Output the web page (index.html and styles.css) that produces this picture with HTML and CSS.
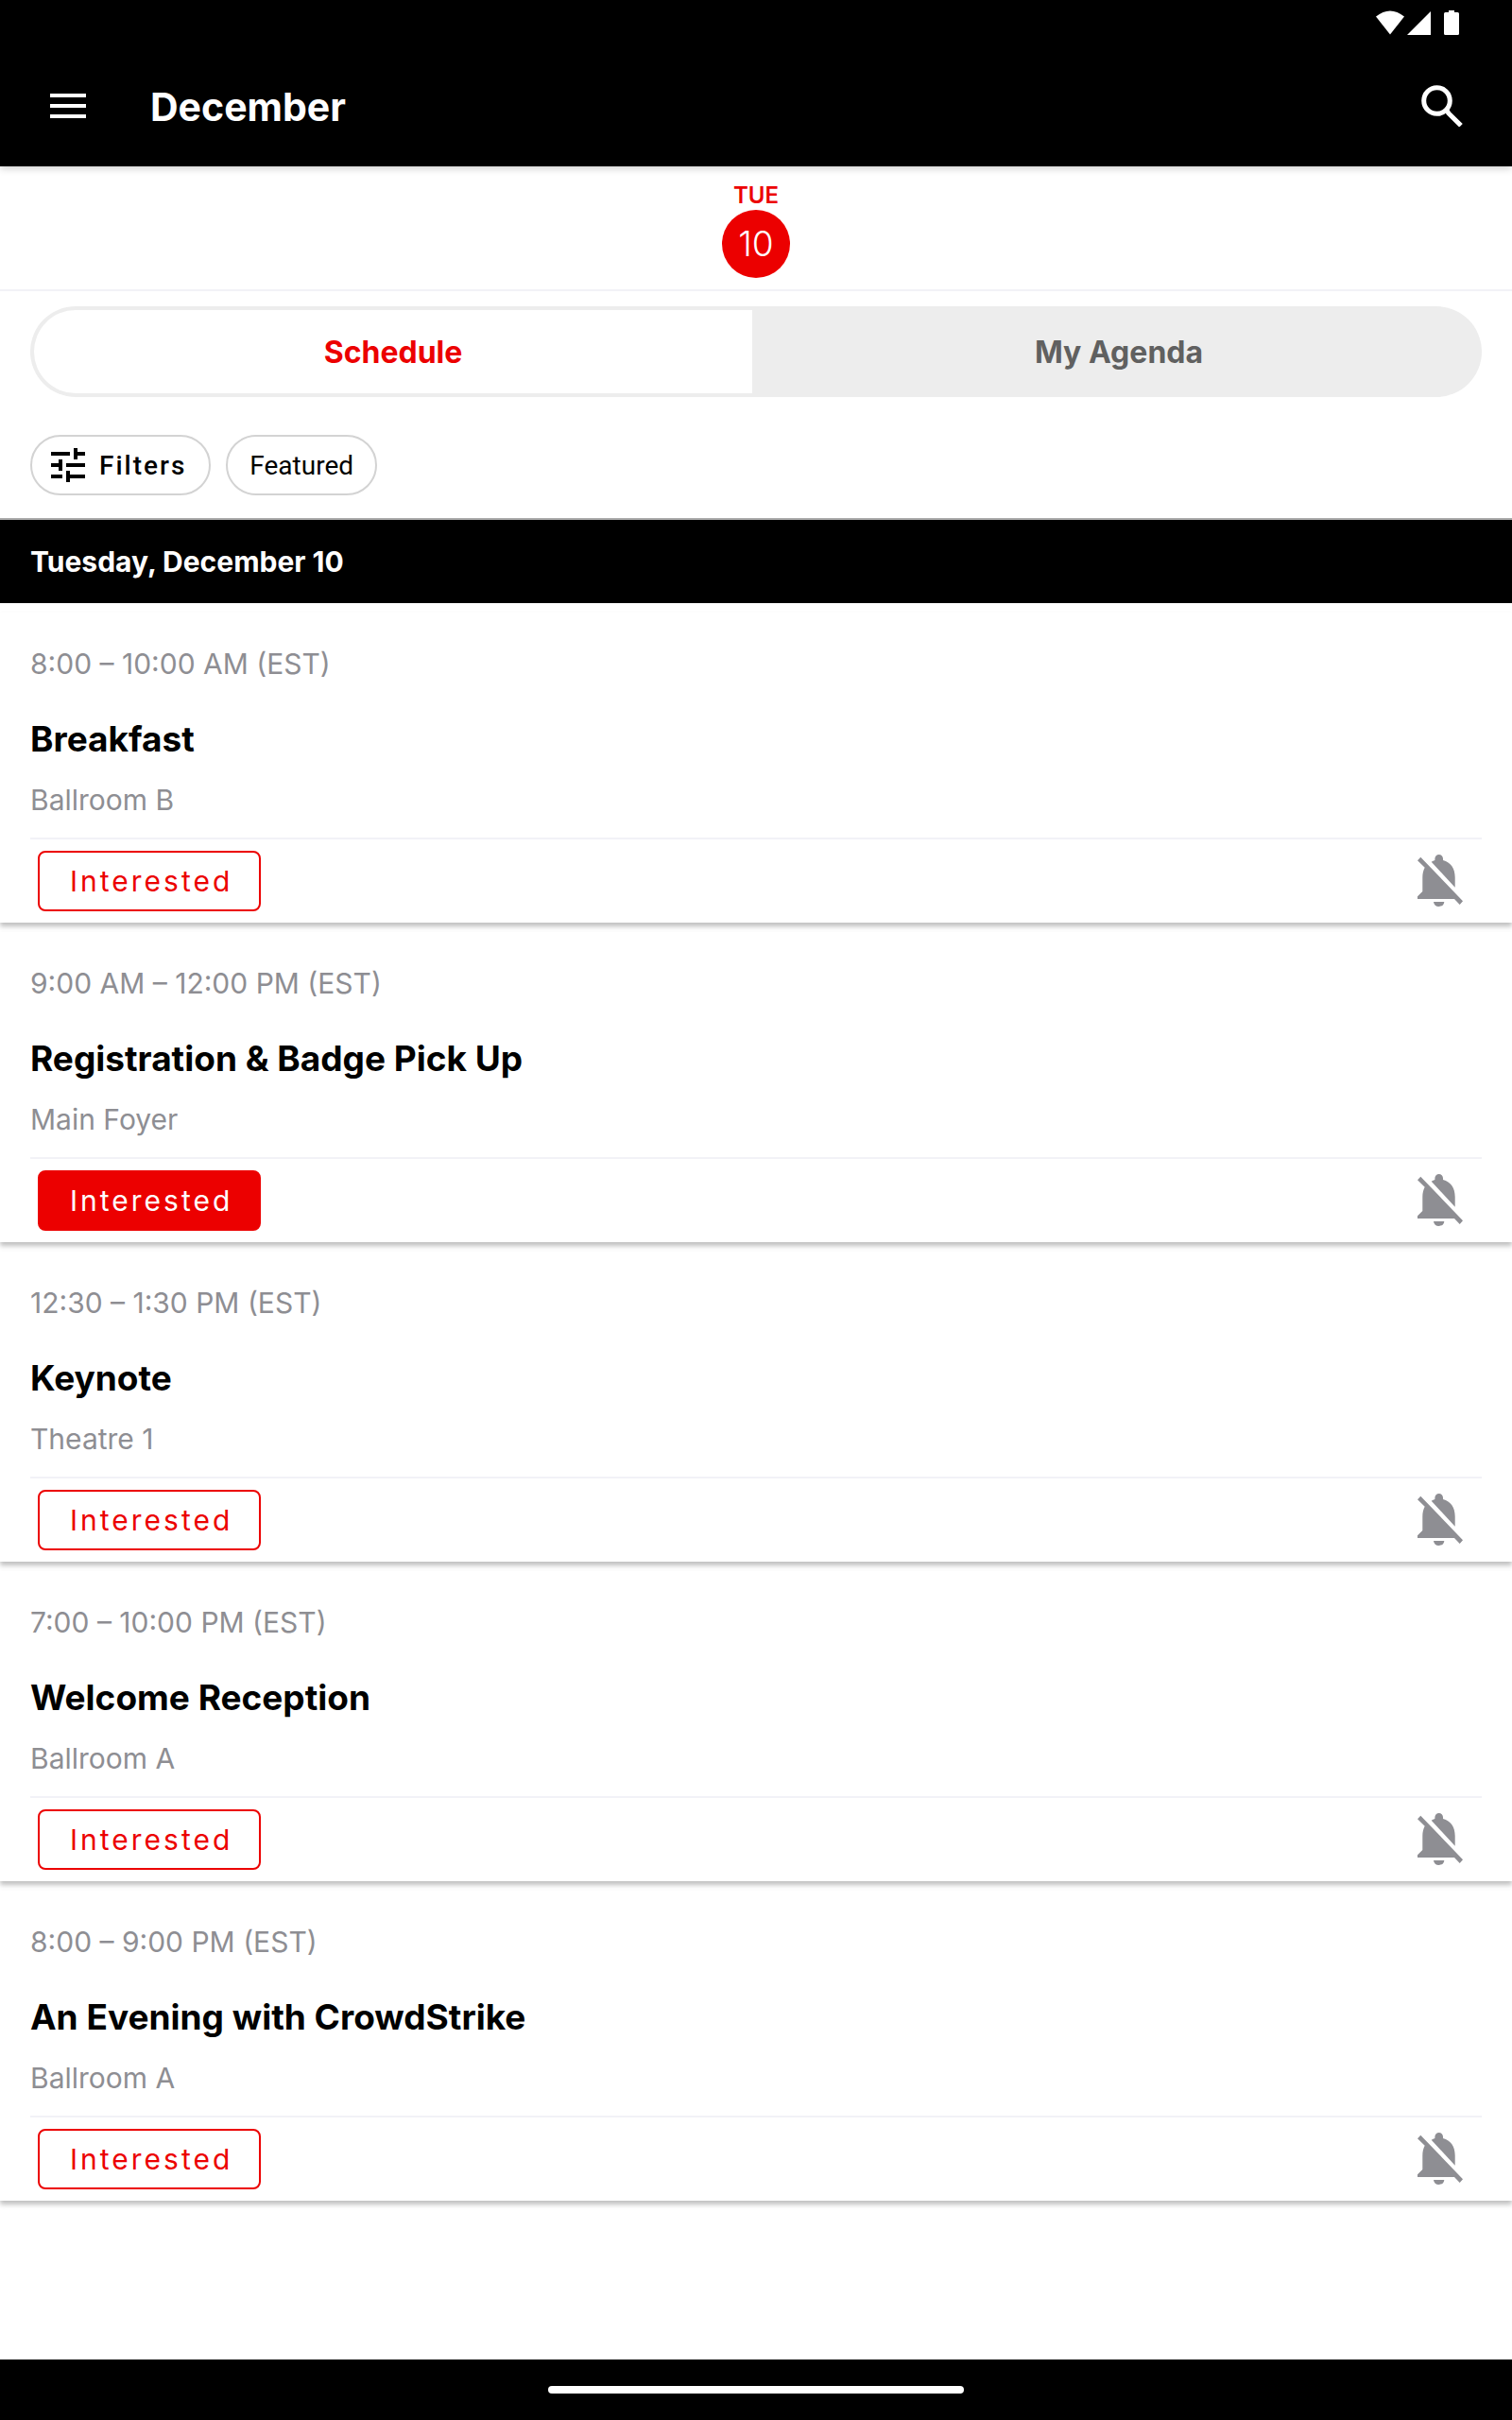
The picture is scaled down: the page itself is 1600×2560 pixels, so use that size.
FILE: index.html
```html
<!DOCTYPE html>
<html lang="en">
<head>
  <meta charset="UTF-8">
  <meta name="viewport" content="width=device-width, initial-scale=1.0">
  <title>Schedule - December</title>
  <link rel="stylesheet" href="styles.css">
</head>
<body>

<!-- Icons shared by the session cards -->
<svg class="icon-defs" aria-hidden="true">
  <symbol id="bell-off" viewBox="0 0 48 56">
    <path d="M3.3 2.7 L48 49.3 L44.7 53 L39 47 H0 V44.3 L5.3 39 V24.3 C5.3 20 6.2 16.6 7.7 13.7 L0 6.2 Z"/>
    <path d="M14.7 7.8 Q16.4 6.6 18.4 6.1 V4.3 A4.3 4.3 0 0 1 27 4.3 V6.1 C35.2 8.2 39.7 15 39.7 24 V34.7 Z"/>
    <path d="M17 50 H28.3 A5.7 5.7 0 0 1 17 50 Z"/>
  </symbol>
</svg>

<header class="top">
  <div class="status-bar">
    <svg class="status-icons" viewBox="0 0 90 28" aria-hidden="true">
      <path d="M0 6.5 Q15 -5.5 30 6.5 L15 25.5 Z"/>
      <path d="M33 26 L58 1 V26 Z"/>
      <path d="M77 0 H83 V2 H86.5 Q88 2 88 3.5 V24.5 Q88 26 86.5 26 H73.5 Q72 26 72 24.5 V3.5 Q72 2 73.5 2 H77 Z"/>
    </svg>
  </div>
  <div class="app-bar">
    <button class="icon-button" aria-label="Menu">
      <svg class="menu-icon" viewBox="0 0 38 26"><path d="M0 0H38V4H0zM0 11H38V15H0zM0 22H38V26H0z"/></svg>
    </button>
    <h1>December</h1>
    <button class="icon-button" aria-label="Search">
      <svg class="search-icon" viewBox="0 0 44 44">
        <circle cx="16.5" cy="16.5" r="13.8"/>
        <path d="M27 27 L29 30 L42 42.8"/>
      </svg>
    </button>
  </div>
</header>

<div class="day-picker">
  <button class="day">
    <span class="day-name">TUE</span>
    <span class="day-number">10</span>
  </button>
</div>

<div class="tabs">
  <button class="tab active">Schedule</button>
  <button class="tab">My Agenda</button>
</div>

<div class="filters">
  <button class="chip chip-filters">
    <svg class="tune-icon" viewBox="3 3 18 18" aria-hidden="true"><path d="M3 17v2h6v-2H3zM3 5v2h10V5H3zm10 16v-2h8v-2h-8v-2h-2v6h2zM7 9v2H3v2h4v2h2V9H7zm14 4v-2H11v2h10zm-6-4h2V7h4V5h-4V3h-2v6z"/></svg>
    Filters
  </button>
  <button class="chip">Featured</button>
</div>

<h2 class="date-header">Tuesday, December 10</h2>

<main class="sessions">
  <article class="session">
    <p class="time">8:00 – 10:00 AM (EST)</p>
    <h3>Breakfast</h3>
    <p class="location">Ballroom B</p>
    <div class="actions">
      <button class="interested">Interested</button>
      <button class="icon-button" aria-label="Reminder off"><svg class="bell-icon"><use href="#bell-off"/></svg></button>
    </div>
  </article>

  <article class="session">
    <p class="time">9:00 AM – 12:00 PM (EST)</p>
    <h3>Registration &amp; Badge Pick Up</h3>
    <p class="location">Main Foyer</p>
    <div class="actions">
      <button class="interested selected">Interested</button>
      <button class="icon-button" aria-label="Reminder off"><svg class="bell-icon"><use href="#bell-off"/></svg></button>
    </div>
  </article>

  <article class="session">
    <p class="time">12:30 – 1:30 PM (EST)</p>
    <h3>Keynote</h3>
    <p class="location">Theatre 1</p>
    <div class="actions">
      <button class="interested">Interested</button>
      <button class="icon-button" aria-label="Reminder off"><svg class="bell-icon"><use href="#bell-off"/></svg></button>
    </div>
  </article>

  <article class="session">
    <p class="time">7:00 – 10:00 PM (EST)</p>
    <h3>Welcome Reception</h3>
    <p class="location">Ballroom A</p>
    <div class="actions">
      <button class="interested">Interested</button>
      <button class="icon-button" aria-label="Reminder off"><svg class="bell-icon"><use href="#bell-off"/></svg></button>
    </div>
  </article>

  <article class="session">
    <p class="time">8:00 – 9:00 PM (EST)</p>
    <h3>An Evening with CrowdStrike</h3>
    <p class="location">Ballroom A</p>
    <div class="actions">
      <button class="interested">Interested</button>
      <button class="icon-button" aria-label="Reminder off"><svg class="bell-icon"><use href="#bell-off"/></svg></button>
    </div>
  </article>
</main>

<footer class="home-bar">
  <div class="home-handle"></div>
</footer>

</body>
</html>
```
FILE: styles.css
```css
* {
  box-sizing: border-box;
}
body {
  display: flex;
  flex-direction: column;
  min-height: 100vh;
  margin: 0;
  background-color: #fff;
  color: #000;
  font-family: Inter, sans-serif;
}
h1, h2, h3, p {
  margin: 0;
}
h1, h2, h3, .tab {
  font-weight: 700;
}
button {
  margin: 0;
  padding: 0;
  border: none;
  background: none;
  color: inherit;
  font: inherit;
  cursor: pointer;
}
svg {
  display: block;
}
.icon-defs {
  position: absolute;
  width: 0;
  height: 0;
}

/* Header */
.top {
  background-color: #000;
  color: #fff;
  box-shadow: 0 2px 8px rgba(0,0,0,0.2);
}
.status-bar {
  display: flex;
  justify-content: flex-end;
  height: 48px;
  padding: 11px 54px 0 0;
}
.status-icons {
  width: 90px;
  height: 28px;
  fill: #fff;
}
.app-bar {
  display: flex;
  align-items: center;
  height: 128px;
  padding: 0 52px 0 53px;
}
.app-bar h1 {
  flex: 1;
  margin-left: 68px;
  padding-top: 2px;
  font-size: 41px;
  line-height: 52px;
}
.menu-icon {
  width: 38px;
  height: 26px;
  fill: #fff;
}
.search-icon {
  width: 44px;
  height: 44px;
  fill: none;
  stroke: #fff;
  stroke-width: 5;
}

/* Day picker */
.day-picker {
  display: flex;
  justify-content: center;
  padding: 16px 0 12px;
  border-bottom: 2px solid #f2f2f7;
}
.day {
  display: flex;
  flex-direction: column;
  align-items: center;
}
.day-name {
  color: #ec0000;
  font-size: 24px;
  font-weight: 600;
  line-height: 30px;
}
.day-number {
  width: 72px;
  border-radius: 50%;
  background-color: #ec0000;
  color: #fff;
  font-size: 37px;
  font-weight: 300;
  line-height: 72px;
}

/* Schedule / My Agenda switch */
.tabs {
  display: flex;
  gap: 8px;
  margin: 16px 32px 0;
  padding: 4px;
  border-radius: 48px;
  background-color: #ededed;
}
.tab {
  flex: 1;
  height: 88px;
  color: #606060;
  font-size: 32px;
}
.tab.active {
  border-radius: 44px 0 0 44px;
  background-color: #fff;
  color: #ec0000;
}

/* Filter chips */
.filters {
  display: flex;
  gap: 16px;
  padding: 40px 32px 24px;
}
.chip {
  display: flex;
  align-items: center;
  height: 64px;
  padding: 0 23px;
  border: 2px solid #d3d3d3;
  border-radius: 32px;
  font-family: Roboto, sans-serif;
  font-size: 28px;
}
.chip-filters {
  gap: 15px;
  padding: 0 24px 0 20px;
  font-weight: 500;
  letter-spacing: 2px;
}
.tune-icon {
  width: 36px;
  height: 36px;
}

/* Session list */
.date-header {
  padding: 24px 32px;
  border-top: 2px solid #aaa;
  background-color: #000;
  color: #fff;
  font-size: 30px;
  line-height: 40px;
}
.sessions {
  flex: 1;
}
.session {
  margin-top: 10px;
  padding: 0 32px;
  background-color: #fff;
  box-shadow: 0 4px 5px rgba(0,0,0,0.25);
}
.time, .location {
  color: #8e8e93;
  font-size: 30px;
  line-height: 40px;
}
.time {
  padding-top: 34px;
}
.session h3 {
  margin: 36px 0 20px;
  font-size: 37px;
  line-height: 48px;
}
.actions {
  display: flex;
  align-items: center;
  justify-content: space-between;
  height: 90px;
  margin-top: 20px;
  padding: 0 20px 0 8px;
  border-top: 2px solid #f2f2f7;
}
.interested {
  height: 64px;
  padding: 0 28px 0 32px;
  border: 2px solid #ec0000;
  border-radius: 8px;
  color: #ec0000;
  font-size: 30px;
  letter-spacing: 3px;
}
.interested.selected {
  background-color: #ec0000;
  color: #fff;
}
.bell-icon {
  width: 48px;
  height: 56px;
  fill: #8e8e93;
}

/* System navigation */
.home-bar {
  display: flex;
  align-items: center;
  justify-content: center;
  height: 64px;
  background-color: #000;
}
.home-handle {
  width: 440px;
  height: 8px;
  border-radius: 4px;
  background-color: #fff;
}
```
